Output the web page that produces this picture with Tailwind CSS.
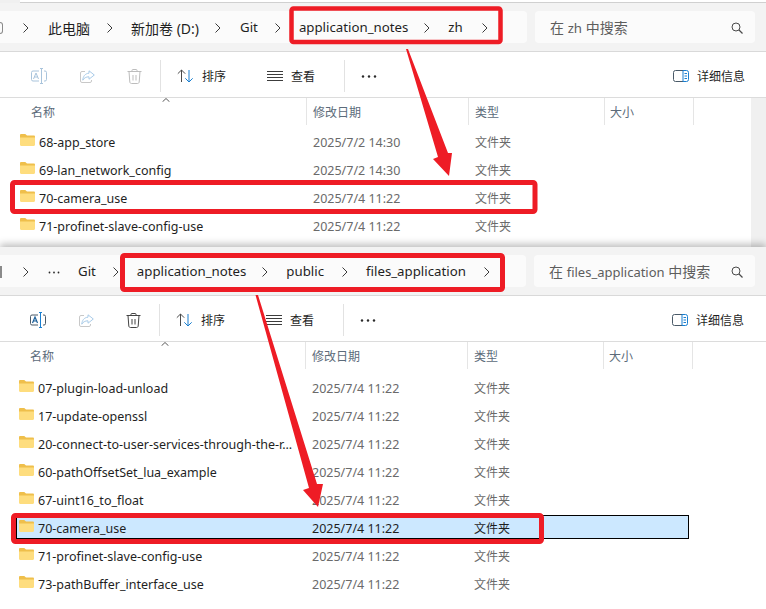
<!DOCTYPE html>
<html lang="zh">
<head>
  <meta charset="UTF-8">
  <title>文件资源管理器</title>
  <script src="https://cdn.jsdelivr.net/npm/@tailwindcss/browser@4"></script>
</head>
<body class="bg-white font-['Noto_Sans','Noto_Sans_CJK_SC',sans-serif]">

  <!-- shared icons -->
  <svg class="absolute w-0 h-0">
    <symbol id="folder" viewBox="0 0 15 12">
      <path d="M0 1.2C0 .5.5 0 1.2 0h3.6c.4 0 .7.1 1 .4L7 1.5h6.8c.7 0 1.2.5 1.2 1.2V5H0z" fill="#efbf4b"/>
      <path d="M0 3.6h15v7.2c0 .7-.5 1.2-1.2 1.2H1.2C.5 12 0 11.5 0 10.8z" fill="#fedd7e"/>
    </symbol>
    <symbol id="chev" viewBox="0 0 8 12">
      <path d="M1.5 1.5 6 6l-4.500 4.500" fill="none" stroke="#3a3a3a" stroke-width="1"/>
    </symbol>
    <symbol id="lens" viewBox="0 0 12 12">
      <circle cx="5" cy="5" r="4" fill="none" stroke="#4a4a4a" stroke-width="1"/>
      <path d="M8 8l3.500 3.500" stroke="#4a4a4a" stroke-width="1.300"/>
    </symbol>
    <symbol id="sort" viewBox="0 0 17 14">
      <path d="M4.500 13V1M.8 4.700 4.500 1l3.700 3.700" fill="none" stroke="#4a4a4a" stroke-width="1"/>
      <path d="M12 1v12M8.300 9.300 12 13l3.700-3.700" fill="none" stroke="#1a7fd0" stroke-width="1"/>
    </symbol>
    <symbol id="lines" viewBox="0 0 16 10">
      <path d="M0 .5h16M0 3.500h16M0 6.500h16M0 9.500h16" stroke="#3c3c3c" stroke-width="1"/>
    </symbol>
    <symbol id="dots" viewBox="0 0 16 3">
      <circle cx="2" cy="1.500" r="1.200" fill="#2a2a2a"/>
      <circle cx="8" cy="1.500" r="1.200" fill="#2a2a2a"/>
      <circle cx="14" cy="1.500" r="1.200" fill="#2a2a2a"/>
    </symbol>
    <symbol id="pane" viewBox="0 0 16 12">
      <path d="M10 .5H2.500a2 2 0 0 0-2 2v7a2 2 0 0 0 2 2H10" fill="none" stroke="#4a5a68" stroke-width="1"/>
      <path d="M10 .5h3.500a2 2 0 0 1 2 2v7a2 2 0 0 1-2 2H10z" fill="none" stroke="#1a7fd0" stroke-width="1"/>
      <path d="M11.500 3.500h2.500M11.500 6h2.500M11.500 8.500h2.500" stroke="#1a7fd0" stroke-width="1"/>
    </symbol>
  </svg>

  <div class="relative flex flex-col w-[766px] h-[609px] overflow-hidden">

    <!-- upper window -->
    <div class="h-[247px] flex flex-col shrink-0 bg-[#f0f0f0]">
      <div class="h-[3px] bg-white border-b border-[#d0d0d0] ml-[20px]"></div>
      <div class="h-[49px] flex gap-2 pt-2 bg-[#f3f3f3] border-b border-[#d9d9d9]">
        <div class="relative w-[527px] h-8 flex items-center pt-[2px] bg-[#fbfbfb] rounded-r text-[13.25px] text-[#1f1f1f]">
          <span class="w-[3px] h-3 border-y border-r border-[#8a8a8a] rounded-r-sm"></span>
          <svg class="w-2 h-3 ml-[19px]"><use href="#chev"/></svg>
          <span class="ml-[18px] text-[14px]">此电脑</span>
          <svg class="w-2 h-3 ml-[16px]"><use href="#chev"/></svg>
          <span class="ml-[17px] text-[14px]">新加卷 (D:)</span>
          <svg class="w-2 h-3 ml-[15px]"><use href="#chev"/></svg>
          <span class="ml-[18px]">Git</span>
          <svg class="w-2 h-3 ml-[16px]"><use href="#chev"/></svg>
          <span class="ml-[17px]">application_notes</span>
          <svg class="w-2 h-3 ml-[15px]"><use href="#chev"/></svg>
          <span class="ml-[17px]">zh</span>
          <svg class="w-2 h-3 ml-[18px]"><use href="#chev"/></svg>
        </div>
        <div class="w-[220px] h-8 flex items-center justify-between pt-[1px] pl-[15px] pr-3 bg-[#fbfbfb] rounded text-[14px] text-[#5d5d5d]">
          <span>在 <span class="text-[13.25px]">zh</span> 中搜索</span>
          <svg class="w-3 h-3"><use href="#lens"/></svg>
        </div>
      </div>
      <div class="h-[46px] shrink-0 flex items-center pt-[3px] bg-white border-b border-[#dcdcdc] text-xs text-[#1f1f1f]">
        <div class="w-[31px]"></div>
        <svg class="w-4 h-4" viewBox="0 0 16 16" fill="none" stroke="#a9c4dc"><path d="M8 3H2A1.500 1.500 0 0 0 .5 4.500v7A1.500 1.500 0 0 0 2 13h6M13 3h1a1.500 1.500 0 0 1 1.500 1.500v7A1.500 1.500 0 0 1 14 13h-1M10.500.5v15M9 .5h3M9 15.500h3M2.500 11l2.500-6 2.500 6M3.300 9h3.400"/></svg>
        <svg class="w-[15px] h-[13px] ml-[33px]" viewBox="0 0 15 13" fill="none" stroke="#a9cbe8"><path d="M9 .8 14.300 5 9 9.200V6.800C6 6.800 4 8 2.800 10.200 3 6.500 5 3.500 9 3.200z"/><path d="M5 1.500H2A1.500 1.500 0 0 0 .5 3v8A1.500 1.500 0 0 0 2 12.500h8a1.500 1.500 0 0 0 1.500-1.500v-1" stroke="#c8c8c8"/></svg>
        <svg class="w-[15px] h-[15px] ml-[32px]" viewBox="0 0 15 15" fill="none" stroke="#bdbdbd"><path d="M.5 2.500h14M5 2.500V1.200c0-.4.300-.7.700-.7h3.600c.4 0 .7.300.7.700v1.300M2 2.500l.8 10.500c.1.900.8 1.500 1.600 1.500h6.200c.8 0 1.500-.6 1.600-1.500L13 2.500M6 6v5.500M9 6v5.500"/></svg>
        <div class="w-px h-8 bg-[#e2e2e2] ml-[18px]"></div>
        <svg class="w-[17px] h-[14px] ml-[16px]"><use href="#sort"/></svg>
        <span class="ml-2 mt-[2px]">排序</span>
        <svg class="w-4 h-[10px] ml-[41px]"><use href="#lines"/></svg>
        <span class="ml-2 mt-[2px]">查看</span>
        <div class="w-px h-8 bg-[#e2e2e2] ml-[29px]"></div>
        <svg class="w-4 h-[3px] ml-4"><use href="#dots"/></svg>
        <svg class="w-4 h-3 ml-auto"><use href="#pane"/></svg>
        <span class="ml-2 mr-[21px] mt-[2px]">详细信息</span>
      </div>
      <div class="relative w-[751px] flex-1 bg-white text-xs">
        <div class="flex h-[27px] items-center text-[#5c6b7a]">
          <div class="w-[306px] pl-[31px] pt-[3px]">名称</div>
          <div class="w-[162px] h-full flex items-center pl-[6px] pt-[3px] border-l border-[#e5e5e5]">修改日期</div>
          <div class="w-[136px] h-full flex items-center pl-[6px] pt-[3px] border-l border-[#e5e5e5]">类型</div>
          <div class="w-[90px] h-full flex items-center pl-[5px] pt-[3px] border-x border-[#e5e5e5]">大小</div>
        </div>
        <svg class="absolute left-[162px] top-[0px] w-2 h-1" viewBox="0 0 8 4" fill="none" stroke="#5a5a5a"><path d="M.5 3.800 4 .5l3.500 3.300"/></svg>
        <div class="flex flex-col gap-1 pt-1 text-[#6a6a6a] text-[12.5px]">
          <div class="flex h-6 items-center pt-1">
            <div class="w-[306px] flex items-center pl-[20px] text-[#1f1f1f]"><svg class="w-[15px] h-3 mr-1 -mt-[7px]"><use href="#folder"/></svg>68-app_store</div>
            <div class="w-[162px] pl-[7px]">2025/7/2 14:30</div><div class="pl-[7px] text-xs">文件夹</div>
          </div>
          <div class="flex h-6 items-center pt-1">
            <div class="w-[306px] flex items-center pl-[20px] text-[#1f1f1f]"><svg class="w-[15px] h-3 mr-1 -mt-[7px]"><use href="#folder"/></svg>69-lan_network_config</div>
            <div class="w-[162px] pl-[7px]">2025/7/2 14:30</div><div class="pl-[7px] text-xs">文件夹</div>
          </div>
          <div class="flex h-6 items-center pt-1">
            <div class="w-[306px] flex items-center pl-[20px] text-[#1f1f1f]"><svg class="w-[15px] h-3 mr-1 -mt-[7px]"><use href="#folder"/></svg>70-camera_use</div>
            <div class="w-[162px] pl-[7px]">2025/7/4 11:22</div><div class="pl-[7px] text-xs">文件夹</div>
          </div>
          <div class="flex h-6 items-center pt-1">
            <div class="w-[306px] flex items-center pl-[20px] text-[#1f1f1f]"><svg class="w-[15px] h-3 mr-1 -mt-[7px]"><use href="#folder"/></svg>71-profinet-slave-config-use</div>
            <div class="w-[162px] pl-[7px]">2025/7/4 11:22</div><div class="pl-[7px] text-xs">文件夹</div>
          </div>
        </div>
      </div>
    </div>

    <!-- lower window -->
    <div class="relative flex-1 flex flex-col bg-white shadow-[0_-3px_7px_rgba(0,0,0,0.25)]">
      <div class="h-[49px] shrink-0 flex gap-2 pt-2 bg-[#f3f3f3] border-b border-[#d9d9d9]">
        <div class="w-[526px] h-8 flex items-center pt-[2px] bg-[#fbfbfb] rounded-r text-[13.25px] text-[#1f1f1f]">
          <span class="w-[2px] h-3 bg-[#8a8a8a]"></span>
          <svg class="w-2 h-3 ml-[20px]"><use href="#chev"/></svg>
          <svg class="w-3 h-[3px] ml-[18px]"><use href="#dots"/></svg>
          <span class="ml-[18px]">Git</span>
          <svg class="w-2 h-3 ml-[16px]"><use href="#chev"/></svg>
          <span class="ml-[17px]">application_notes</span>
          <svg class="w-2 h-3 ml-[15px]"><use href="#chev"/></svg>
          <span class="ml-[17px]">public</span>
          <svg class="w-2 h-3 ml-[17px]"><use href="#chev"/></svg>
          <span class="ml-[17px]">files_application</span>
          <svg class="w-2 h-3 ml-[17px]"><use href="#chev"/></svg>
        </div>
        <div class="w-[221px] h-8 flex items-center justify-between pt-[1px] pl-[15px] pr-3 bg-[#fbfbfb] rounded text-[14px] text-[#5d5d5d]">
          <span>在 <span class="text-[13px]">files_application</span> 中搜索</span>
          <svg class="w-3 h-3"><use href="#lens"/></svg>
        </div>
      </div>
      <div class="h-[46px] shrink-0 flex items-center pt-[3px] border-b border-[#dcdcdc] text-xs text-[#1f1f1f]">
        <div class="w-[30px]"></div>
        <svg class="w-4 h-4" viewBox="0 0 16 16" fill="none" stroke="#4a5a68"><path d="M8 3H2A1.500 1.500 0 0 0 .5 4.500v7A1.500 1.500 0 0 0 2 13h6M13 3h1a1.500 1.500 0 0 1 1.500 1.500v7A1.500 1.500 0 0 1 14 13h-1"/><path d="M10.500.5v15M9 .5h3M9 15.500h3" stroke="#1a7fd0"/><path d="M2.500 11l2.500-6 2.500 6M3.300 9h3.400" stroke="#1a5f9a" stroke-width="1.200"/></svg>
        <svg class="w-[15px] h-[13px] ml-[33px]" viewBox="0 0 15 13" fill="none" stroke="#a9cbe8"><path d="M9 .8 14.300 5 9 9.200V6.800C6 6.800 4 8 2.800 10.200 3 6.500 5 3.500 9 3.200z"/><path d="M5 1.500H2A1.500 1.500 0 0 0 .5 3v8A1.500 1.500 0 0 0 2 12.500h8a1.500 1.500 0 0 0 1.500-1.500v-1" stroke="#c8c8c8"/></svg>
        <svg class="w-[15px] h-[15px] ml-[32px]" viewBox="0 0 15 15" fill="none" stroke="#444"><path d="M.5 2.500h14M5 2.500V1.200c0-.4.300-.7.700-.7h3.600c.4 0 .7.300.7.700v1.300M2 2.500l.8 10.500c.1.900.8 1.500 1.600 1.500h6.200c.8 0 1.500-.6 1.600-1.500L13 2.500M6 6v5.500M9 6v5.500"/></svg>
        <div class="w-px h-8 bg-[#e2e2e2] ml-[18px]"></div>
        <svg class="w-[17px] h-[14px] ml-[16px]"><use href="#sort"/></svg>
        <span class="ml-2 mt-[2px]">排序</span>
        <svg class="w-4 h-[10px] ml-[41px]"><use href="#lines"/></svg>
        <span class="ml-2 mt-[2px]">查看</span>
        <div class="w-px h-8 bg-[#e2e2e2] ml-[29px]"></div>
        <svg class="w-4 h-[3px] ml-4"><use href="#dots"/></svg>
        <svg class="w-4 h-3 ml-auto"><use href="#pane"/></svg>
        <span class="ml-2 mr-[22px] mt-[2px]">详细信息</span>
      </div>
      <div class="relative flex-1 text-xs">
        <div class="flex h-[27px] items-center text-[#5c6b7a]">
          <div class="w-[305px] pl-[30px] pt-[3px]">名称</div>
          <div class="w-[162px] h-full flex items-center pl-[6px] pt-[3px] border-l border-[#e5e5e5]">修改日期</div>
          <div class="w-[136px] h-full flex items-center pl-[6px] pt-[3px] border-l border-[#e5e5e5]">类型</div>
          <div class="w-[90px] h-full flex items-center pl-[5px] pt-[3px] border-x border-[#e5e5e5]">大小</div>
        </div>
        <svg class="absolute left-[161px] top-[0px] w-2 h-1" viewBox="0 0 8 4" fill="none" stroke="#5a5a5a"><path d="M.5 3.800 4 .5l3.500 3.300"/></svg>
        <div class="flex flex-col gap-1 pt-[6px] text-[#6a6a6a] text-[12.5px]">
          <div class="flex h-6 items-center pt-1">
            <div class="w-[305px] flex items-center pl-[19px] text-[#1f1f1f]"><svg class="w-[15px] h-3 mr-1 -mt-[7px]"><use href="#folder"/></svg>07-plugin-load-unload</div>
            <div class="w-[162px] pl-[7px]">2025/7/4 11:22</div><div class="pl-[7px] text-xs">文件夹</div>
          </div>
          <div class="flex h-6 items-center pt-1">
            <div class="w-[305px] flex items-center pl-[19px] text-[#1f1f1f]"><svg class="w-[15px] h-3 mr-1 -mt-[7px]"><use href="#folder"/></svg>17-update-openssl</div>
            <div class="w-[162px] pl-[7px]">2025/7/4 11:22</div><div class="pl-[7px] text-xs">文件夹</div>
          </div>
          <div class="flex h-6 items-center pt-1">
            <div class="w-[305px] flex items-center pl-[19px] text-[#1f1f1f]"><svg class="w-[15px] h-3 mr-1 -mt-[7px]"><use href="#folder"/></svg>20-connect-to-user-services-through-the-r...</div>
            <div class="w-[162px] pl-[7px]">2025/7/4 11:22</div><div class="pl-[7px] text-xs">文件夹</div>
          </div>
          <div class="flex h-6 items-center pt-1">
            <div class="w-[305px] flex items-center pl-[19px] text-[#1f1f1f]"><svg class="w-[15px] h-3 mr-1 -mt-[7px]"><use href="#folder"/></svg>60-pathOffsetSet_lua_example</div>
            <div class="w-[162px] pl-[7px]">2025/7/4 11:22</div><div class="pl-[7px] text-xs">文件夹</div>
          </div>
          <div class="flex h-6 items-center pt-1">
            <div class="w-[305px] flex items-center pl-[19px] text-[#1f1f1f]"><svg class="w-[15px] h-3 mr-1 -mt-[7px]"><use href="#folder"/></svg>67-uint16_to_float</div>
            <div class="w-[162px] pl-[7px]">2025/7/4 11:22</div><div class="pl-[7px] text-xs">文件夹</div>
          </div>
          <!-- selected row -->
          <div class="flex h-6 items-center pt-1 ml-[16px] w-[673px] bg-[#cce8ff] border border-black text-[#1f1f1f]">
            <div class="w-[288px] flex items-center pl-[2px]"><svg class="w-[15px] h-3 mr-1 -mt-[7px]"><use href="#folder"/></svg>70-camera_use</div>
            <div class="w-[162px] pl-[7px]">2025/7/4 11:22</div><div class="pl-[7px] text-xs">文件夹</div>
          </div>
          <div class="flex h-6 items-center pt-1">
            <div class="w-[305px] flex items-center pl-[19px] text-[#1f1f1f]"><svg class="w-[15px] h-3 mr-1 -mt-[7px]"><use href="#folder"/></svg>71-profinet-slave-config-use</div>
            <div class="w-[162px] pl-[7px]">2025/7/4 11:22</div><div class="pl-[7px] text-xs">文件夹</div>
          </div>
          <div class="flex h-6 items-center pt-1">
            <div class="w-[305px] flex items-center pl-[19px] text-[#1f1f1f]"><svg class="w-[15px] h-3 mr-1 -mt-[7px]"><use href="#folder"/></svg>73-pathBuffer_interface_use</div>
            <div class="w-[162px] pl-[7px]">2025/7/4 11:22</div><div class="pl-[7px] text-xs">文件夹</div>
          </div>
        </div>
      </div>
    </div>

    <!-- red annotations on top of the screenshot -->
    <svg class="absolute left-0 top-0 w-[766px] h-[609px] pointer-events-none" viewBox="0 0 766 609">
      <g fill="none" stroke="#ee1c25" stroke-linejoin="round">
        <rect x="291.500" y="8.500" width="209" height="33.500" rx="2" stroke-width="4.500"/>
        <rect x="12.500" y="182.500" width="522.500" height="29" rx="2" stroke-width="5"/>
        <rect x="122.500" y="255.500" width="380" height="34" rx="2" stroke-width="5"/>
        <rect x="13.500" y="515.500" width="528" height="26" rx="2" stroke-width="5"/>
      </g>
      <polygon fill="#ee1c25" points="406,49 408,49 448,153 452,153 449,176 433,159 438,157"/>
      <polygon fill="#ee1c25" points="255.500,295 258,295 317,484 323,484 318,507 303,490 309,488"/>
    </svg>
  </div>
</body>
</html>
